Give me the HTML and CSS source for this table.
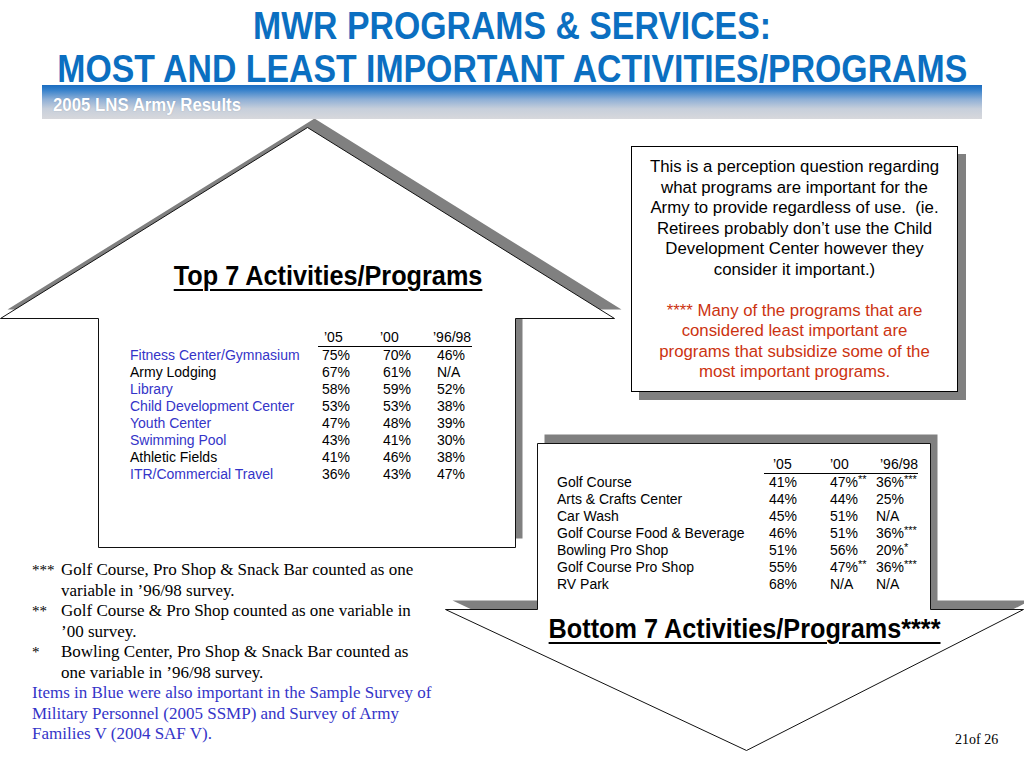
FILE: index.html
```html
<!DOCTYPE html>
<html lang="en">
<head>
<meta charset="utf-8">
<title>MWR Programs &amp; Services</title>
<link rel="stylesheet" href="styles.css">
</head>
<body>
<div class="slide">
  <h1 class="title"><span class="t-line">MWR PROGRAMS &amp; SERVICES:</span><br><span class="t-line">MOST AND LEAST IMPORTANT ACTIVITIES/PROGRAMS</span></h1>
  <div class="subbar"><span class="subbar-text">2005 LNS Army Results</span></div>

  <svg class="shapes" width="1024" height="768" viewBox="0 0 1024 768" aria-hidden="true">
    <g class="shadow" transform="translate(7,-9)">
      <polygon points="0.5,318.5 307.5,127.5 614.5,318.5 515.5,318.5 515.5,547.5 98.5,547.5 98.5,318.5"/>
      <polygon points="537.5,443.5 930.5,443.5 930.5,609.5 1023.5,609.5 746.5,750.5 445.5,609.5 537.5,609.5"/>
    </g>
    <g class="shape">
      <polygon points="0.5,318.5 307.5,127.5 614.5,318.5 515.5,318.5 515.5,547.5 98.5,547.5 98.5,318.5"/>
      <polygon points="537.5,443.5 930.5,443.5 930.5,609.5 1023.5,609.5 746.5,750.5 445.5,609.5 537.5,609.5"/>
    </g>
  </svg>

  <div class="heading heading-top"><span class="heading-text">Top 7 Activities/Programs</span></div>

  <div class="table table-top">
    <div class="thead"><span>’05</span><span>’00</span><span>’96/98</span></div>
    <div class="row blue"><span>Fitness Center/Gymnasium</span><span>75%</span><span>70%</span><span>46%</span></div>
    <div class="row"><span>Army Lodging</span><span>67%</span><span>61%</span><span>N/A</span></div>
    <div class="row blue"><span>Library</span><span>58%</span><span>59%</span><span>52%</span></div>
    <div class="row blue"><span>Child Development Center</span><span>53%</span><span>53%</span><span>38%</span></div>
    <div class="row blue"><span>Youth Center</span><span>47%</span><span>48%</span><span>39%</span></div>
    <div class="row blue"><span>Swimming Pool</span><span>43%</span><span>41%</span><span>30%</span></div>
    <div class="row"><span>Athletic Fields</span><span>41%</span><span>46%</span><span>38%</span></div>
    <div class="row blue"><span>ITR/Commercial Travel</span><span>36%</span><span>43%</span><span>47%</span></div>
  </div>

  <div class="note">
    <p class="note-main">This is a perception question regarding<br>what programs are important for the<br>Army to provide regardless of use.&nbsp; (ie.<br>Retirees probably don’t use the Child<br>Development Center however they<br>consider it important.)</p>
    <p class="note-red">**** Many of the programs that are<br>considered least important are<br>programs that subsidize some of the<br>most important programs.</p>
  </div>

  <div class="table table-bottom">
    <div class="thead"><span>’05</span><span>’00</span><span>’96/98</span></div>
    <div class="row"><span>Golf Course</span><span>41%</span><span>47%<sup class="ast">**</sup></span><span>36%<sup class="ast">***</sup></span></div>
    <div class="row"><span>Arts &amp; Crafts Center</span><span>44%</span><span>44%</span><span>25%</span></div>
    <div class="row"><span>Car Wash</span><span>45%</span><span>51%</span><span>N/A</span></div>
    <div class="row"><span>Golf Course Food &amp; Beverage</span><span>46%</span><span>51%</span><span>36%<sup class="ast">***</sup></span></div>
    <div class="row"><span>Bowling Pro Shop</span><span>51%</span><span>56%</span><span>20%<sup class="ast">*</sup></span></div>
    <div class="row"><span>Golf Course Pro Shop</span><span>55%</span><span>47%<sup class="ast">**</sup></span><span>36%<sup class="ast">***</sup></span></div>
    <div class="row"><span>RV Park</span><span>68%</span><span>N/A</span><span>N/A</span></div>
  </div>

  <div class="heading heading-bottom"><span class="heading-text">Bottom 7 Activities/Programs****</span></div>

  <div class="footnotes">
    <div class="fn"><span class="mark">***</span><span>Golf Course, Pro Shop &amp; Snack Bar counted as one<br>variable in ’96/98 survey.</span></div>
    <div class="fn"><span class="mark">**</span><span>Golf Course &amp; Pro Shop counted as one variable in<br>’00 survey.</span></div>
    <div class="fn"><span class="mark">*</span><span>Bowling Center, Pro Shop &amp; Snack Bar counted as<br>one variable in ’96/98 survey.</span></div>
    <p class="fn-blue">Items in Blue were also important in the Sample Survey of<br>Military Personnel (2005 SSMP) and Survey of Army<br>Families V (2004 SAF V).</p>
  </div>

  <div class="page-num">21of 26</div>
</div>
</body>
</html>
```

FILE: styles.css
```css
html, body {
  margin: 0;
  padding: 0;
  background: #ffffff;
}

.slide {
  position: relative;
  width: 1024px;
  height: 768px;
  overflow: hidden;
  background: #ffffff;
  font-family: "Liberation Sans", Arial, sans-serif;
  color: #000;
}

.title {
  box-sizing: border-box;
  height: 85px;
  margin: 0;
  padding-top: 5px;
  text-align: center;
  font-family: "Liberation Sans", Arial, sans-serif;
  font-weight: bold;
  font-size: 38px;
  line-height: 43px;
  color: #0b6fc1;
  white-space: nowrap;
}

.t-line {
  display: inline-block;
  transform: scaleX(0.89);
  transform-origin: center;
}

.subbar {
  position: relative;
  z-index: 1;
  box-sizing: border-box;
  width: 940px;
  height: 34px;
  margin-left: 42px;
  padding: 10px 0 0 11px;
  background: linear-gradient(to bottom, #1a6cc0 0%, #3480cb 14%, #8eafd6 42%, #c7cfdb 70%, #d7d8dc 100%);
  line-height: 20px;
}

.subbar-text {
  display: inline-block;
  font-size: 17.5px;
  font-weight: bold;
  color: #ffffff;
  transform: scaleX(0.96);
  transform-origin: left center;
  text-shadow: 0 0 1px rgba(80, 100, 130, 0.5);
}

.shapes {
  position: absolute;
  left: 0;
  top: 0;
}

.shadow polygon {
  fill: #808080;
  stroke: none;
}

.shape polygon {
  fill: #ffffff;
  stroke: #111111;
  stroke-width: 1;
}

.heading {
  position: absolute;
  width: 500px;
  text-align: center;
  font-size: 27px;
  font-weight: bold;
  line-height: 30px;
  white-space: nowrap;
}

.heading-text {
  display: inline-block;
  transform: scaleX(0.935);
  transform-origin: center;
  text-decoration: underline;
  text-decoration-thickness: 2px;
  text-underline-offset: 4px;
}

.heading-top {
  left: 78px;
  top: 261px;
}

.heading-bottom {
  left: 495px;
  top: 614px;
}

.table {
  position: absolute;
  font-size: 14px;
  line-height: 17px;
  white-space: nowrap;
}

.row {
  display: grid;
  grid-template-columns: var(--c0) var(--c1) var(--c2) auto;
}

.row.blue span:first-child {
  color: #3434c8;
}

.thead {
  display: grid;
  box-sizing: border-box;
  width: 154px;
  border-bottom: 1px solid #000;
}

.table-top {
  left: 130px;
  top: 329px;
  --c0: 192px;
  --c1: 61px;
  --c2: 54px;
}

.table-top .thead {
  margin-left: 188px;
  padding-left: 6px;
  grid-template-columns: 56px 53px auto;
}

.table-bottom {
  left: 557px;
  top: 456px;
  --c0: 212px;
  --c1: 61px;
  --c2: 46px;
}

.table-bottom .thead {
  margin-left: 207px;
  padding-left: 9px;
  grid-template-columns: 57px 50px auto;
}

.ast {
  font-size: 11px;
  line-height: 0;
  vertical-align: 4px;
}

.note {
  position: absolute;
  left: 631px;
  top: 146px;
  box-sizing: border-box;
  width: 327px;
  height: 246px;
  padding-top: 10px;
  border: 1px solid #000;
  background: #ffffff;
  box-shadow: 8px 8px 0 #808080;
  text-align: center;
  font-size: 16.8px;
  line-height: 20.5px;
  white-space: nowrap;
}

.note p {
  margin: 0;
}

.note-red {
  margin-top: 20.5px !important;
  color: #cc3311;
}

.footnotes {
  position: absolute;
  left: 32px;
  top: 560px;
  font-family: "Liberation Serif", "Times New Roman", serif;
  font-size: 17px;
  line-height: 20.5px;
  white-space: nowrap;
}

.fn {
  display: grid;
  grid-template-columns: 29px auto;
}

.mark {
  font-size: 15px;
}

.fn-blue {
  margin: 0;
  color: #3434c8;
}

.page-num {
  position: absolute;
  left: 955px;
  top: 731px;
  font-family: "Liberation Serif", "Times New Roman", serif;
  font-size: 14px;
  line-height: 18px;
}
```
